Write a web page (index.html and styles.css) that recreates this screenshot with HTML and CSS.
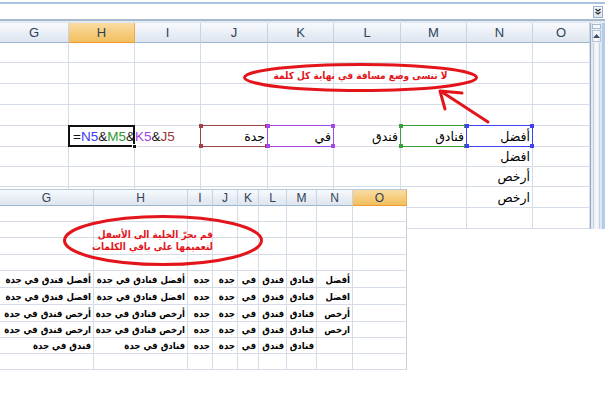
FILE: index.html
```html
<!DOCTYPE html>
<html lang="ar">
<head>
<meta charset="utf-8">
<title>Excel</title>
<link rel="stylesheet" href="styles.css">
</head>
<body>
<div class="page">
  <div class="fxbar">
    <div class="fxbox">
      <span class="expand"><svg width="8" height="8" viewBox="0 0 8 8"><path d="M1.5 1 L4 3 L6.5 1 M1.5 4 L4 6 L6.5 4" fill="none" stroke="#222" stroke-width="1.2"/></svg></span>
    </div>
  </div>

  <div class="sheet" dir="ltr">
    <div class="vscroll">
      <div class="split"></div>
      <div class="up"><svg width="7" height="4" viewBox="0 0 7 4"><path d="M0 4 L3.5 0 L7 4 Z" fill="#3d4f66"/></svg></div>
      <div class="track"></div>
    </div>
    <div class="hd">G</div><div class="hd on">H</div><div class="hd">I</div><div class="hd">J</div><div class="hd">K</div><div class="hd">L</div><div class="hd">M</div><div class="hd">N</div><div class="hd">O</div>

    <div class="c"></div><div class="c"></div><div class="c"></div><div class="c"></div><div class="c"></div><div class="c"></div><div class="c"></div><div class="c"></div><div class="c"></div>
    <div class="c"></div><div class="c"></div><div class="c"></div><div class="c"></div><div class="c"></div><div class="c"></div><div class="c"></div><div class="c"></div><div class="c"></div>
    <div class="c"></div><div class="c"></div><div class="c"></div><div class="c"></div><div class="c"></div><div class="c"></div><div class="c"></div><div class="c"></div><div class="c"></div>
    <div class="c"></div><div class="c"></div><div class="c"></div><div class="c"></div><div class="c"></div><div class="c"></div><div class="c"></div><div class="c"></div><div class="c"></div>

    <div class="c"></div>
    <div class="c fcell"><span class="formula">=<b class="fn">N5</b>&amp;<b class="fm">M5</b>&amp;<b class="fk">K5</b>&amp;<b class="fj">J5</b></span><i class="fill"></i></div>
    <div class="c"></div>
    <div class="c ref ref-j"><span class="t">جدة</span><i class="hx tl"></i><i class="hx tr"></i><i class="hx bl"></i><i class="hx br"></i></div>
    <div class="c ref ref-k"><span class="t">في</span><i class="hx tl"></i><i class="hx tr"></i><i class="hx bl"></i><i class="hx br"></i></div>
    <div class="c"><span class="t">فندق</span></div>
    <div class="c ref ref-m"><span class="t">فنادق</span><i class="hx tl"></i><i class="hx tr"></i><i class="hx bl"></i><i class="hx br"></i></div>
    <div class="c ref ref-n"><span class="t">أفضل</span><i class="hx tl"></i><i class="hx tr"></i><i class="hx bl"></i><i class="hx br"></i></div>
    <div class="c"></div>

    <div class="c"></div><div class="c"></div><div class="c"></div><div class="c"></div><div class="c"></div><div class="c"></div><div class="c"></div><div class="c"><span class="t">افضل</span></div><div class="c"></div>
    <div class="c"></div><div class="c"></div><div class="c"></div><div class="c"></div><div class="c"></div><div class="c"></div><div class="c"></div><div class="c"><span class="t">أرخص</span></div><div class="c"></div>
    <div class="c"></div><div class="c"></div><div class="c"></div><div class="c"></div><div class="c"></div><div class="c"></div><div class="c"></div><div class="c"><span class="t">ارخص</span></div><div class="c"></div>
    <div class="c"></div><div class="c"></div><div class="c"></div><div class="c"></div><div class="c"></div><div class="c"></div><div class="c"></div><div class="c"></div><div class="c"></div>
  </div>

  <div class="note note-top">لا تنسى وضع مسافة في نهاية كل كلمة</div>

  <div class="shot">
    <div class="lh">G</div><div class="lh">H</div><div class="lh">I</div><div class="lh">J</div><div class="lh">K</div><div class="lh">L</div><div class="lh">M</div><div class="lh">N</div><div class="lh on">O</div>

    <div class="lc"></div><div class="lc"></div><div class="lc"></div><div class="lc"></div><div class="lc"></div><div class="lc"></div><div class="lc"></div><div class="lc"></div><div class="lc"></div>
    <div class="lc"></div><div class="lc"></div><div class="lc"></div><div class="lc"></div><div class="lc"></div><div class="lc"></div><div class="lc"></div><div class="lc"></div><div class="lc"></div>
    <div class="lc"></div><div class="lc"></div><div class="lc"></div><div class="lc"></div><div class="lc"></div><div class="lc"></div><div class="lc"></div><div class="lc"></div><div class="lc"></div>
    <div class="lc"></div><div class="lc"></div><div class="lc"></div><div class="lc"></div><div class="lc"></div><div class="lc"></div><div class="lc"></div><div class="lc"></div><div class="lc"></div>

    <div class="lc">أفضل فندق في جدة</div><div class="lc">أفضل فنادق في جدة</div><div class="lc">جده</div><div class="lc">جدة</div><div class="lc">في</div><div class="lc">فندق</div><div class="lc">فنادق</div><div class="lc">أفضل</div><div class="lc"></div>
    <div class="lc">افضل فندق في جدة</div><div class="lc">افضل فنادق في جدة</div><div class="lc">جده</div><div class="lc">جدة</div><div class="lc">في</div><div class="lc">فندق</div><div class="lc">فنادق</div><div class="lc">افضل</div><div class="lc"></div>
    <div class="lc">أرخص فندق في جدة</div><div class="lc">أرخص فنادق في جدة</div><div class="lc">جده</div><div class="lc">جدة</div><div class="lc">في</div><div class="lc">فندق</div><div class="lc">فنادق</div><div class="lc">أرخص</div><div class="lc"></div>
    <div class="lc">ارخص فندق في جدة</div><div class="lc">ارخص فنادق في جدة</div><div class="lc">جده</div><div class="lc">جدة</div><div class="lc">في</div><div class="lc">فندق</div><div class="lc">فنادق</div><div class="lc">ارخص</div><div class="lc"></div>
    <div class="lc">فندق في جدة</div><div class="lc">فنادق في جدة</div><div class="lc">جده</div><div class="lc">جدة</div><div class="lc">في</div><div class="lc">فندق</div><div class="lc">فنادق</div><div class="lc"></div><div class="lc"></div>
    <div class="lc"></div><div class="lc"></div><div class="lc"></div><div class="lc"></div><div class="lc"></div><div class="lc"></div><div class="lc"></div><div class="lc"></div><div class="lc"></div>

    <div class="note note-low">قم بجرّ الخلية الى الأسفل<br>لتعميمها على باقي الكلمات</div>
  </div>

  <svg class="marks" width="605" height="400" viewBox="0 0 605 400">
    <ellipse cx="360.5" cy="77.5" rx="116" ry="13" fill="none" stroke="#e3151b" stroke-width="3"/>
    <ellipse cx="163" cy="240.5" rx="98.5" ry="24" fill="none" stroke="#e3151b" stroke-width="3"/>
    <path d="M488 122 L442 92" fill="none" stroke="#e3151b" stroke-width="3" stroke-linecap="round"/>
    <path d="M445 109 L440 91 L462 93" fill="none" stroke="#e3151b" stroke-width="3" stroke-linecap="round" stroke-linejoin="round"/>
  </svg>
</div>
</body>
</html>
```

FILE: styles.css
```css
html, body {
  margin: 0;
  padding: 0;
  background: #ffffff;
}

.page {
  position: relative;
  width: 605px;
  height: 400px;
  overflow: hidden;
  font-family: "Liberation Sans", "DejaVu Sans", sans-serif;
  color: #000;
}

/* formula bar strip */
.fxbar {
  height: 23px;
  box-sizing: border-box;
  padding-top: 2px;
  border-bottom: 2px solid #e2e9f3;
}

.fxbox {
  height: 19px;
  box-sizing: border-box;
  border-top: 2px solid #a8c4e3;
  border-bottom: 2px solid #a9b9cd;
  display: flex;
  justify-content: flex-end;
  align-items: center;
  padding-right: 2px;
}

.expand {
  width: 10px;
  height: 12px;
  box-sizing: border-box;
  border: 1px solid #9db1ca;
  background: linear-gradient(#f6f8fb, #dbe3ee);
  display: flex;
  align-items: center;
  justify-content: center;
}

/* main sheet */
.sheet {
  display: grid;
  grid-template-columns: 69px 66px 66px 67px 66px 67px 66px 66px 57px 15px;
  grid-template-rows: 20px 20px 21px 21px 21px 21px 20px 20px 21px 21px;
}

.vscroll {
  grid-column: 10;
  grid-row: 1 / span 10;
  box-sizing: border-box;
  border-left: 1px solid #97abc6;
  border-right: 3px solid #b3cbec;
  background: linear-gradient(to right, #dfe5ee, #f5f7fa 50%, #dce3ed);
  display: flex;
  flex-direction: column;
}

.split {
  height: 5px;
  margin: 1px 1px 0;
  box-sizing: border-box;
  border: 1px solid #a8b9cf;
  background: #f4f7fb;
}

.up {
  height: 12px;
  margin: 1px 1px 0;
  box-sizing: border-box;
  border: 1px solid #b5c4d8;
  background: linear-gradient(to right, #e9eef5, #fbfcfd, #e6ebf2);
  display: flex;
  align-items: center;
  justify-content: center;
}

.track {
  flex: 1;
  margin: 1px 2px 0;
  border-left: 1px solid #c7d2e0;
  border-right: 1px solid #c7d2e0;
}

.hd {
  box-sizing: border-box;
  border-right: 1px solid #c6d3e3;
  border-bottom: 1px solid #9fb6cf;
  background: linear-gradient(#f8fafd, #e9eef5 55%, #dde5ef);
  display: flex;
  align-items: center;
  justify-content: center;
  font-size: 13px;
  color: #2e4256;
}

.hd.on,
.lh.on {
  background: linear-gradient(#f9dca3, #f6cd7f 50%, #f2bf5e);
  border-right-color: #f1a945;
  border-bottom-color: #f09a31;
}

.c {
  position: relative;
  box-sizing: border-box;
  border-right: 1px solid #d5dbe7;
  border-bottom: 1px solid #d5dbe7;
  display: flex;
  align-items: center;
  justify-content: flex-end;
  padding-right: 2px;
  font-size: 12.5px;
}

.t {
  white-space: nowrap;
}

/* formula cell */
.fcell {
  justify-content: flex-start;
  padding: 0 0 0 4px;
  z-index: 3;
}

.fcell::after {
  content: "";
  position: absolute;
  left: -1px;
  top: -1px;
  right: -1px;
  bottom: -1px;
  border: 2px solid #111;
  pointer-events: none;
}

.formula {
  position: relative;
  z-index: 2;
  white-space: nowrap;
  font-size: 13.5px;
  color: #111;
}

.formula b {
  font-weight: normal;
}

.fn { color: #3a3af0; }
.fm { color: #2f9a30; }
.fk { color: #a13ee6; }
.fj { color: #9a3636; }

.fill {
  position: absolute;
  right: -3px;
  bottom: -3px;
  width: 5px;
  height: 5px;
  background: #111;
  border: 1px solid #fff;
  box-sizing: border-box;
  z-index: 4;
}

/* reference boxes */
.ref::after {
  content: "";
  position: absolute;
  left: -1px;
  top: -1px;
  right: -1px;
  bottom: -1px;
  border: 1px solid var(--rc);
  pointer-events: none;
}

.ref-j { --rc: #a04545; }
.ref-k { --rc: #a548ea; }
.ref-m { --rc: #3d9f3d; }
.ref-n { --rc: #3f3ff5; }

.hx {
  position: absolute;
  width: 4px;
  height: 4px;
  background: var(--rc);
  z-index: 2;
}

.tl { left: -2px; top: -2px; }
.tr { right: -2px; top: -2px; }
.bl { left: -2px; bottom: -2px; }
.br { right: -2px; bottom: -2px; }

/* notes */
.note {
  position: absolute;
  color: #e3151b;
  font-family: "DejaVu Sans Condensed", "DejaVu Sans", sans-serif;
  font-weight: bold;
  direction: rtl;
  white-space: nowrap;
  z-index: 6;
}

.note-top {
  left: 243px;
  top: 69px;
  width: 235px;
  text-align: center;
  font-size: 10px;
  line-height: 14px;
}

/* lower pasted screenshot */
.shot {
  position: absolute;
  left: 0;
  top: 189px;
  width: 407px;
  height: 181px;
  background: #fff;
  display: grid;
  grid-template-columns: 94px 94px 25px 25px 21px 28px 30px 36px 54px;
  grid-template-rows: 17px 16px 16px 17px 16px 17px 17px 17px 16px 16px 16px;
  z-index: 5;
}

.lh {
  box-sizing: border-box;
  border-right: 1px solid #c6d3e3;
  border-bottom: 1px solid #9fb6cf;
  border-top: 1px solid #b9c9dc;
  background: linear-gradient(#f8fafd, #e9eef5 55%, #dde5ef);
  display: flex;
  align-items: center;
  justify-content: center;
  font-size: 12px;
  color: #2e4256;
}

.lc {
  box-sizing: border-box;
  border-right: 1px solid #d5dbe7;
  border-bottom: 1px solid #d5dbe7;
  display: flex;
  align-items: center;
  justify-content: flex-end;
  padding-right: 2px;
  white-space: nowrap;
  font-family: "DejaVu Sans Condensed", "DejaVu Sans", sans-serif;
  font-size: 9.5px;
  font-weight: bold;
}

.shot .lc:nth-child(9n) {
  border-right-color: #c9d0dc;
}

.note-low {
  right: 194px;
  top: 40px;
  text-align: right;
  font-size: 10px;
  line-height: 11.5px;
}

.marks {
  position: absolute;
  left: 0;
  top: 0;
  z-index: 8;
  pointer-events: none;
}
```
